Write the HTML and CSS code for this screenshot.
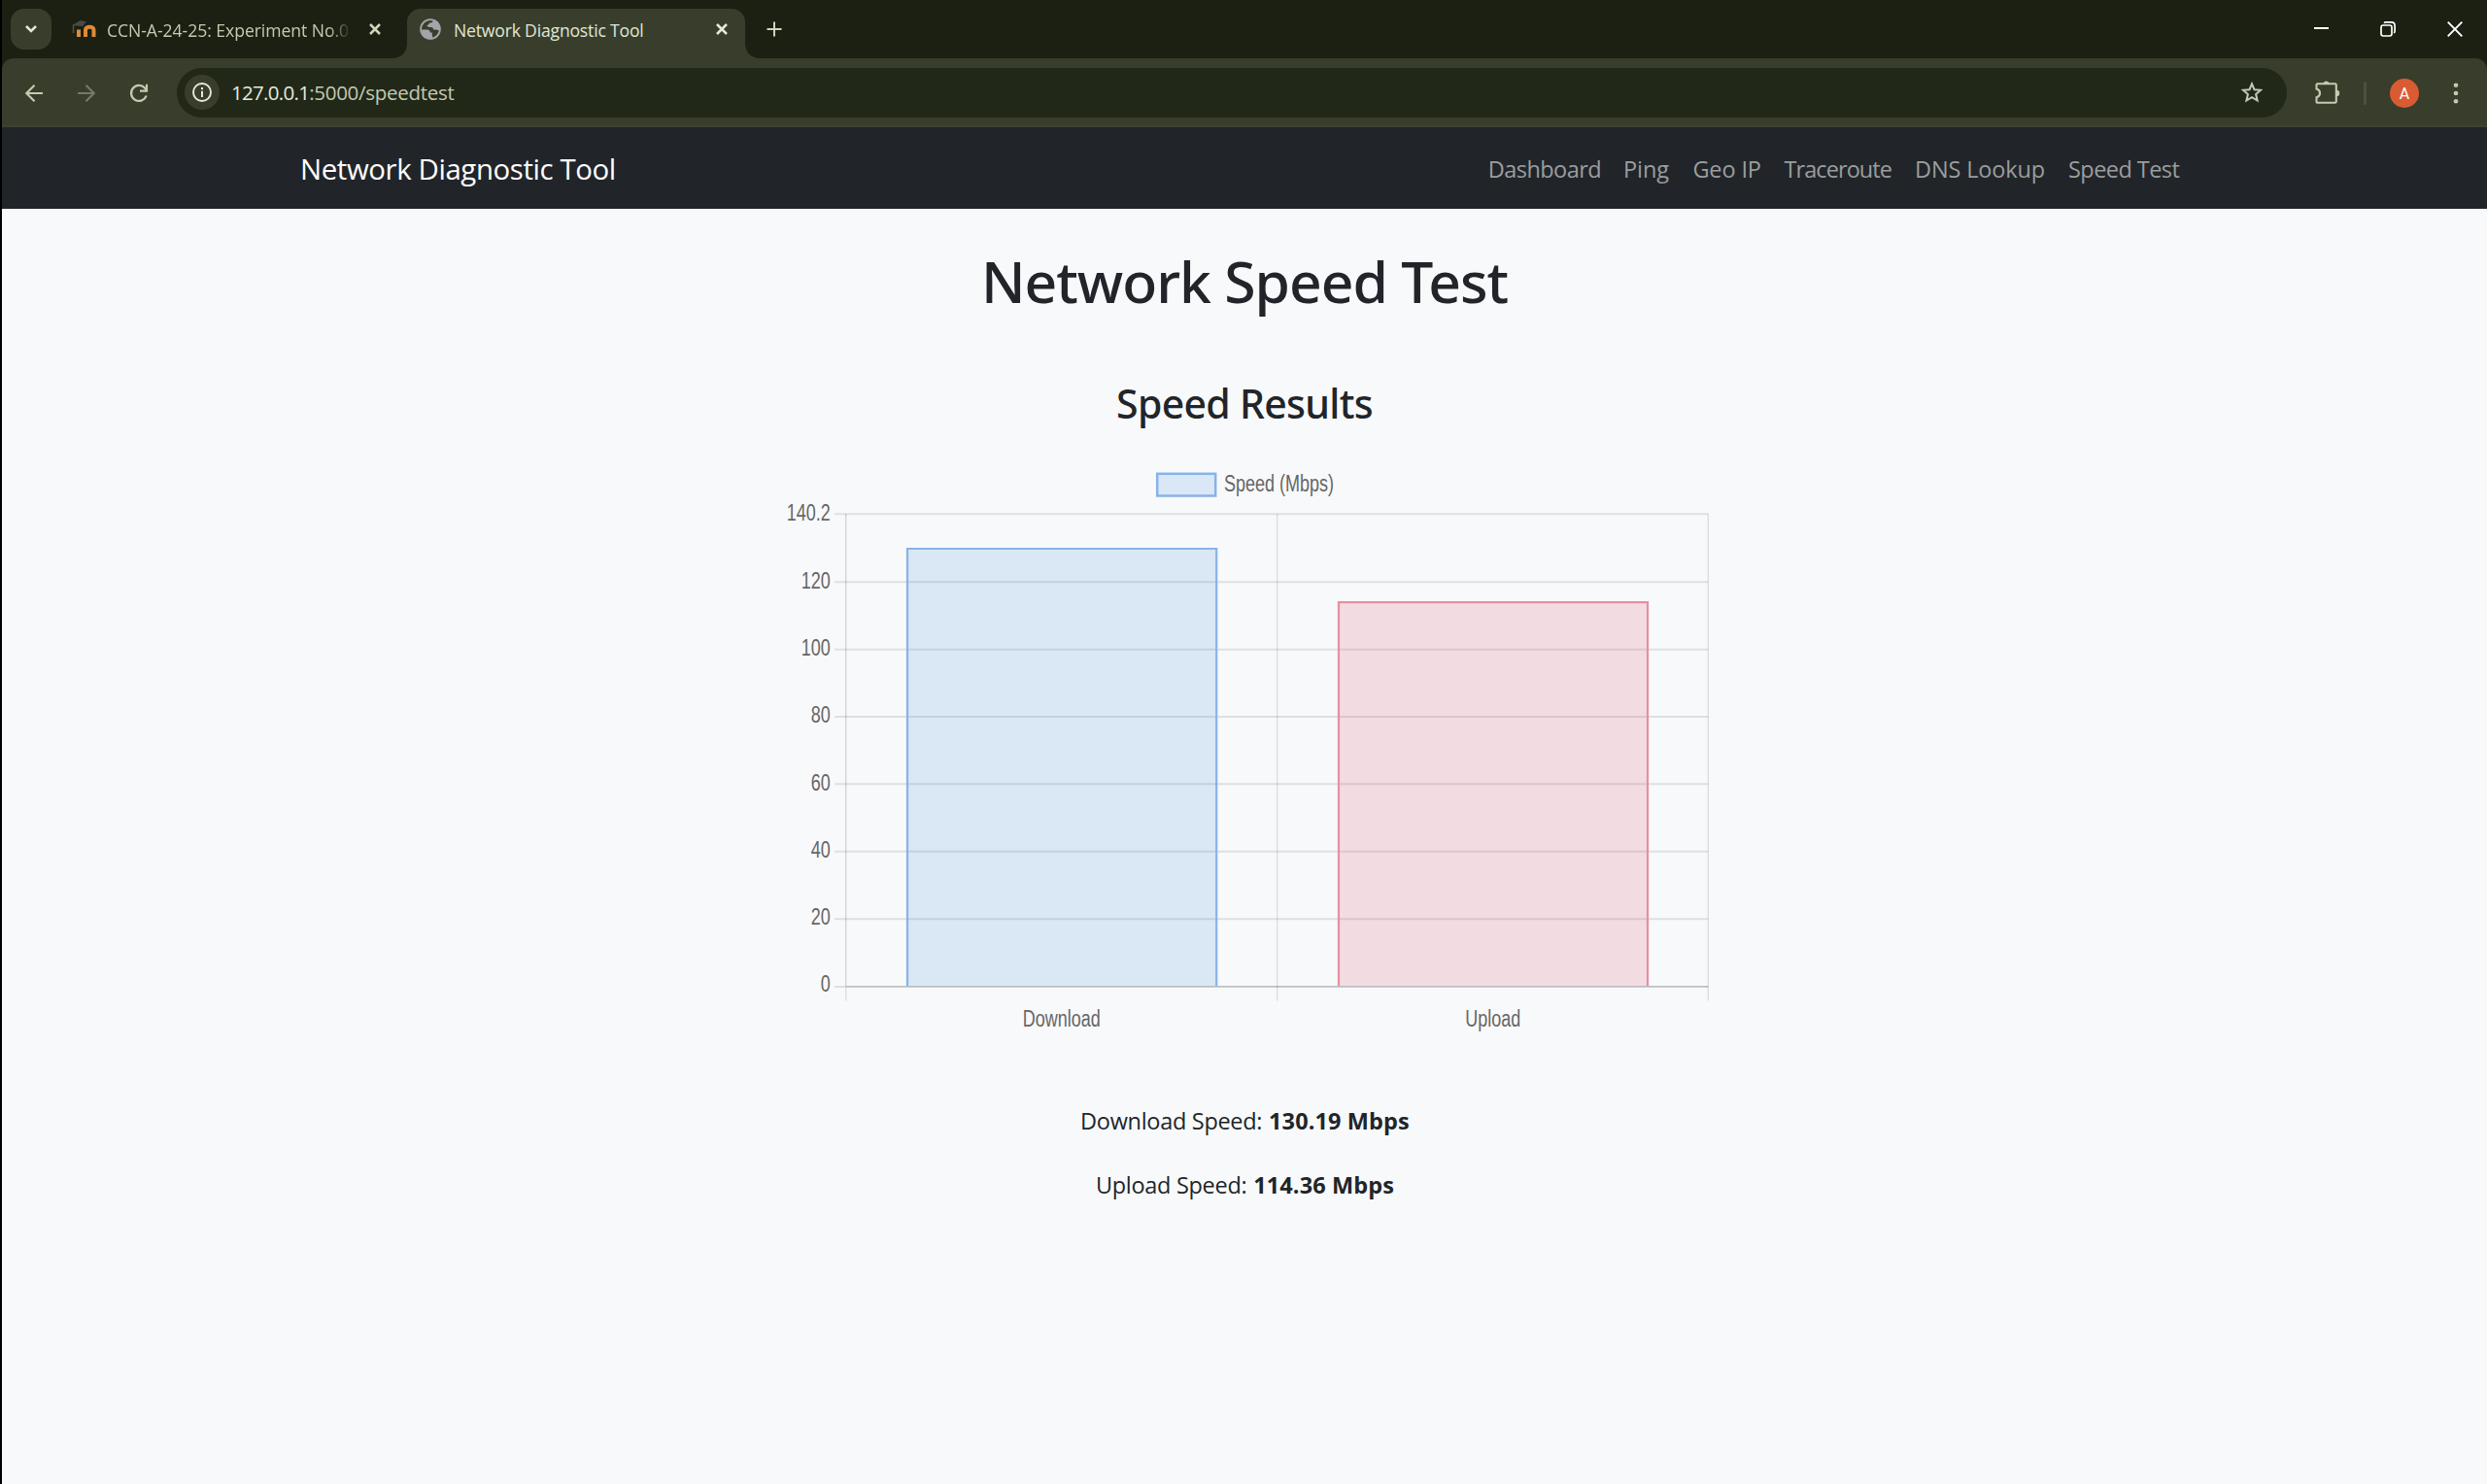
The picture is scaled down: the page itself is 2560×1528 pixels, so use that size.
FILE: index.html
```html
<!DOCTYPE html>
<html lang="en">
<head>
<meta charset="utf-8">
<title>Network Diagnostic Tool</title>
<link rel="stylesheet" href="styles.css">
</head>
<body>
<div class="browser">
<div class="tabstrip">
  <button class="tab-search" aria-label="Search tabs"><svg width="14" height="10" viewBox="0 0 14 10"><path d="M2 2l5 5 5-5" fill="none" stroke="#e3e6d6" stroke-width="2.5"/></svg></button>
  <div class="tab">
    <svg class="favicon-moodle" width="25" height="18" viewBox="0 0 25 18"><path d="M7 17V9.500" fill="none" stroke="#dc8a3a" stroke-width="4"/><path d="M14 17V10c0-4.500 8.500-4.500 8.500 0v7" fill="none" stroke="#dc8a3a" stroke-width="4"/><path d="M0 5L9 0l6 1.500-4 4.500-7-.5z" fill="#4b474c"/><path d="M1.500 5v8" stroke="#6b4932" stroke-width="1.500"/></svg>
    <span class="tab-title faded">CCN-A-24-25: Experiment No.01</span>
    <svg class="tab-close" width="12" height="12" viewBox="0 0 12 12"><path d="M1 1l10 10M11 1L1 11" stroke="#cfd6ba" stroke-width="2.500"/></svg>
  </div>
  <div class="tab active">
    <svg class="globe" width="22" height="22" viewBox="0 0 22 22"><circle cx="11" cy="11" r="9.900" fill="none" stroke="#a2a5ab" stroke-width="1.800"/><path d="M1.500 11.500h6c2 0 3.300 1 3.300 3h2v3c.6.600.6 1.500 0 2.600l-4 .4-5-3zM14 1.800c-.5 2.400-2 3-4.300 3-.2 1.700-1 2-2.200 2.300 0 1.700 1 2 4.500 2 1.500 0 2 .9 2 2.500h3c.8 0 1.500 1 3.500.7L20.500 7 17 3z" fill="#a2a5ab"/></svg>
    <span class="tab-title">Network Diagnostic Tool</span>
    <svg class="tab-close" width="12" height="12" viewBox="0 0 12 12"><path d="M1 1l10 10M11 1L1 11" stroke="#e6ead8" stroke-width="2.500"/></svg>
  </div>
  <svg class="new-tab" width="16" height="16" viewBox="0 0 16 16"><path d="M8 .5v15M.5 8h15" stroke="#cfd6ba" stroke-width="2"/></svg>
  <div class="window-controls">
    <svg width="15" height="16" viewBox="0 0 15 16"><path d="M0 7h15" stroke="#fff" stroke-width="2"/></svg>
    <svg width="16" height="16" viewBox="0 0 16 16"><rect x="1" y="4" width="11" height="11" rx="2.200" fill="none" stroke="#fff" stroke-width="1.700"/><path d="M4 1.800C4.500 1.200 5 .9 6 .9h5.500c2 0 3.600 1.500 3.600 3.600V10c0 1-.4 1.600-1 2" fill="none" stroke="#fff" stroke-width="1.700"/></svg>
    <svg width="16" height="16" viewBox="0 0 16 16"><path d="M.7.7l14.600 14.600M15.300.7L.7 15.300" stroke="#fff" stroke-width="1.900"/></svg>
  </div>
</div>
<div class="toolbar">
  <svg class="back" width="20" height="20" viewBox="0 0 20 20"><path d="M19 10H3M10.500 1.800L2.300 10l8.200 8.200" fill="none" stroke="#c3cbb0" stroke-width="2.200"/></svg>
  <svg class="forward" width="20" height="20" viewBox="0 0 20 20"><path d="M1 10h16M9.500 1.800l8.200 8.200-8.200 8.200" fill="none" stroke="#747a68" stroke-width="2.200"/></svg>
  <svg class="reload" width="20" height="20" viewBox="0 0 20 20"><path d="M17.600 12.500A8 8 0 1 1 16 4.600l2 2.400" fill="none" stroke="#c3cbb0" stroke-width="2.200"/><path d="M18 .8v6.800h-7" fill="none" stroke="#c3cbb0" stroke-width="2.200"/></svg>
  <div class="omnibox">
    <span class="site-info"><svg width="20" height="20" viewBox="0 0 20 20"><circle cx="10" cy="10" r="9" fill="none" stroke="#e6e9dc" stroke-width="1.900"/><path d="M10 8.800V15M10 5v2.200" stroke="#e6e9dc" stroke-width="2"/></svg></span>
    <span class="url"><span class="host">127.0.0.1</span>:5000/speedtest</span>
    <svg class="star" width="24" height="24" viewBox="0 0 24 24"><path d="M12 3.300l2.500 5.900 6.500.6-4.900 4.300 1.500 6.400L12 17.100l-5.600 3.400 1.500-6.400L3 9.800l6.500-.6z" fill="none" stroke="#c4c8b8" stroke-width="2"/></svg>
  </div>
  <svg class="puzzle" width="26" height="26" viewBox="0 0 26 26"><path d="M2.500 5.200h18a1.300 1.300 0 0 1 1.300 1.300v17a1.300 1.300 0 0 1-1.300 1.300h-18a1 1 0 0 1-1-1v-4.600c4.700-1.400 4.700-7.200 0-8.600V6.200a1 1 0 0 1 1-1z" fill="none" stroke="#c3cbb0" stroke-width="2.100"/><path d="M8.200 5a3.400 3.400 0 0 1 6.600 0zM22 11.700a3.200 3.200 0 0 1 0 6.400z" fill="#c3cbb0"/></svg>
  <span class="separator"></span>
  <span class="avatar">A</span>
  <svg class="menu" width="6" height="24" viewBox="0 0 6 24"><g fill="#c3cbb0"><circle cx="3" cy="3.700" r="2.300"/><circle cx="3" cy="12" r="2.300"/><circle cx="3" cy="20.300" r="2.300"/></g></svg>
</div>
</div>
<header class="navbar">
  <a class="brand">Network Diagnostic Tool</a>
  <nav class="nav-links">
    <a>Dashboard</a><a class="even">Ping</a><a class="even">Geo IP</a><a class="tight">Traceroute</a><a class="even">DNS Lookup</a><a>Speed Test</a>
  </nav>
</header>
<main class="content">
  <h1>Network Speed Test</h1>
  <h2>Speed Results</h2>
  <svg class="chart" width="960" height="600" viewBox="801 470 960 600">
    <rect x="1191.200" y="487.800" width="60" height="22.700" class="down" stroke-width="2.500"/>
    <g class="grid">
      <path stroke-width="2" d="M859 529.200H1758.500M859 599.300H1758.500M859 668.700H1758.500M859 738H1758.500M859 807.300H1758.500M859 876.800H1758.500M859 946.300H1758.500M859 1016H1758.500"/>
      <path stroke-width="1.500" d="M870.700 1016.500V1030.500M1314.700 529V1030.500M1758.300 529V1030.500"/>
      <path class="axis" stroke-width="1.500" d="M870.700 529V1016M870.700 1015.700H1758.500"/>
    </g>
    <rect x="933" y="564" width="320" height="451.200" class="down-fill"/>
    <path d="M934 1015.200V565H1252.200V1015.200" class="down-line"/>
    <rect x="1377" y="619" width="320" height="396.200" class="up-fill"/>
    <path d="M1378 1015.200V620.200H1696V1015.200" class="up-line"/>
    <g class="labels">
      <text transform="translate(1260 505.700) scale(1 1.320)">Speed (Mbps)</text>
      <g text-anchor="end">
        <text transform="translate(854.800 535.500) scale(1 1.320)">140.2</text>
        <text transform="translate(854.800 605.800) scale(1 1.320)">120</text>
        <text transform="translate(854.800 675.200) scale(1 1.320)">100</text>
        <text transform="translate(854.800 744.400) scale(1 1.320)">80</text>
        <text transform="translate(854.800 813.700) scale(1 1.320)">60</text>
        <text transform="translate(854.800 883) scale(1 1.320)">40</text>
        <text transform="translate(854.800 952) scale(1 1.320)">20</text>
        <text transform="translate(854.800 1021.300) scale(1 1.320)">0</text>
      </g>
      <g text-anchor="middle">
        <text transform="translate(1092.700 1056.500) scale(1 1.320)">Download</text>
        <text transform="translate(1536.800 1056.500) scale(1 1.320)">Upload</text>
      </g>
    </g>
  </svg>
  <p>Download Speed: <strong>130.19 Mbps</strong></p>
  <p>Upload Speed: <strong>114.36 Mbps</strong></p>
</main>
</body>
</html>
```
FILE: styles.css
```css
* { box-sizing: border-box; }
body {
  margin: 0;
  height: 1528px;
  overflow: hidden;
  border-left: 2px solid #000;
  background: #f8f9fb;
  color: #212529;
  font-family: "Open Sans", "Noto Sans", sans-serif;
}
svg { display: block; flex: none; }

.browser { background: #1b2013; }
.tabstrip {
  display: flex;
  height: 60px;
  padding: 9px 25px 0 9px;
}
.tab-search {
  display: flex;
  align-items: center;
  justify-content: center;
  width: 42px;
  height: 42px;
  padding: 0;
  border: 0;
  border-radius: 14px;
  background: #383e2b;
}
.tab {
  display: flex;
  align-items: center;
  width: 344px;
  height: 42px;
  padding-left: 21px;
}
.tab-title {
  width: 251px;
  overflow: hidden;
  white-space: nowrap;
  font-size: 17.6px;
  line-height: 26px;
  letter-spacing: -0.05px;
  color: #c3cbb0;
  margin: 1px 0 0 11px;
}
.tab-title.faded {
  -webkit-mask-image: linear-gradient(90deg, #000 228px, transparent 252px);
  mask-image: linear-gradient(90deg, #000 228px, transparent 252px);
}
.tab-close { margin: 0 0 0 19px; }
.tab.active {
  position: relative;
  width: 348px;
  height: 51px;
  margin-left: 22px;
  padding: 0 0 9px 13px;
  border-radius: 14px 14px 0 0;
  background: #383e2b;
}
.tab.active::before,
.tab.active::after {
  content: "";
  position: absolute;
  bottom: 0;
  width: 14px;
  height: 14px;
}
.tab.active::before { right: 100%; background: radial-gradient(circle at 0 0, #1b2013 13.5px, #383e2b 14px); }
.tab.active::after { left: 100%; background: radial-gradient(circle at 100% 0, #1b2013 13.5px, #383e2b 14px); }
.tab.active .tab-title { margin-left: 13px; width: 260px; letter-spacing: -0.19px; color: #e3e6d6; }
.tab.active .tab-close { margin-left: 10px; }
.new-tab { margin: 13px 0 0 22px; }
.window-controls {
  display: flex;
  gap: 53px;
  margin: 13px 0 0 auto;
}

.toolbar {
  display: flex;
  align-items: center;
  height: 71px;
  padding: 0 29px 0 23px;
  border-radius: 12px 12px 0 0;
  background: linear-gradient(#383e2b 69px, #3b4230 69px);
}
.forward { margin-left: 34px; }
.reload { margin-left: 34px; }
.omnibox {
  display: flex;
  align-items: center;
  width: 2172px;
  height: 51px;
  margin: -1px 0 0 29px;
  padding: 0 24px 0 8px;
  border-radius: 26px;
  background: #212818;
}
.site-info {
  display: flex;
  align-items: center;
  justify-content: center;
  width: 36px;
  height: 36px;
  border-radius: 50%;
  background: #383e2b;
}
.url {
  margin: -1px 0 0 12px;
  font-size: 20.500px;
  line-height: 30px;
  letter-spacing: -0.280px;
  color: #c4c8b0;
}
.host { letter-spacing: -0.700px; color: #e6e9dc; }
.star { margin-left: auto; }
.puzzle { margin: -4px 0 0 29px; }
.separator { width: 3px; height: 24px; margin-left: 24px; border-radius: 2px; background: #4b533e; }
.avatar {
  width: 30px;
  height: 30px;
  margin-left: 24px;
  border-radius: 50%;
  background: #d95b33;
  color: #fff;
  font: 16px/31px Roboto, sans-serif;
  text-align: center;
}
.menu { margin-left: auto; }

.navbar {
  display: flex;
  align-items: center;
  justify-content: space-between;
  height: 84px;
  padding: 0 316px 0 307px;
  background: #212529;
}
.brand { padding-top: 2px; color: #fff; font-size: 29.400px; line-height: 44px; letter-spacing: -0.400px; }
.nav-links {
  display: grid;
  grid-template-columns: 139.300px 71.300px 94.100px 134.500px 158px 115px;
  padding-top: 1px;
  color: #9b9d9e;
  font-size: 23.500px;
  line-height: 36px;
  letter-spacing: -0.560px;
  white-space: nowrap;
}
.nav-links .even { letter-spacing: -0.130px; }
.nav-links .tight { letter-spacing: -0.920px; }

.content {
  display: flex;
  flex-direction: column;
  align-items: center;
  padding-top: 38px;
}
h1, h2 { margin: 0; font-family: "Noto Sans", sans-serif; font-weight: 500; }
h1 { font-size: 58.800px; line-height: 72px; letter-spacing: -1px; }
h2 { margin-top: 65px; font-size: 41px; line-height: 50px; letter-spacing: -0.700px; }
.chart { margin-top: 30px; }
p { margin: 0; padding-left: 1px; font-size: 23.500px; line-height: 36px; letter-spacing: -0.300px; }
.chart + p { margin-top: 66px; }
p + p { margin-top: 30px; }
strong { letter-spacing: 0.120px; font-weight: 700; margin-left: 1px; }

.grid path { fill: none; stroke: rgba(0, 0, 0, 0.1); }
.grid .axis { stroke: rgba(0, 0, 0, 0.14); }
.down { fill: #dae7f6; stroke: #86b3e8; }
.down-fill { fill: rgba(48, 125, 215, 0.150); }
.down-line { fill: none; stroke: #86b3e8; stroke-width: 2.200px; }
.up-fill { fill: rgba(210, 55, 80, 0.150); }
.up-line { fill: none; stroke: #e98ea1; stroke-width: 2.200px; }
.labels { fill: #666; font-family: "Liberation Sans", Arial, sans-serif; font-size: 18px; }
```
